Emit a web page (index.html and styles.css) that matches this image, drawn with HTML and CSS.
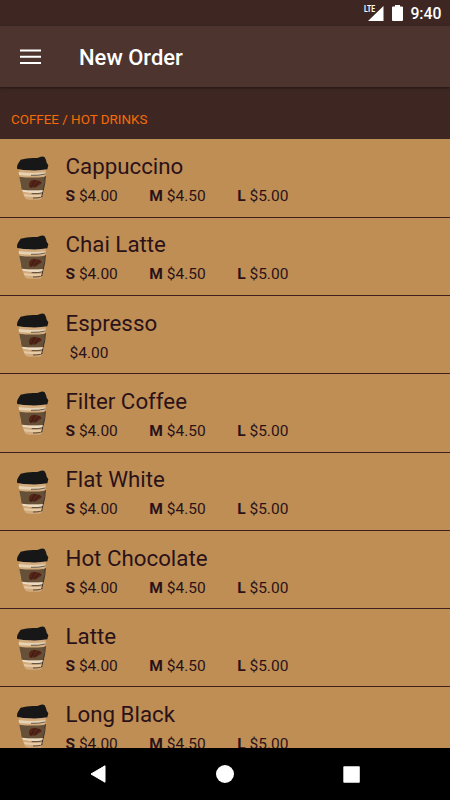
FILE: index.html
```html
<!DOCTYPE html>
<html lang="en">
<head>
    <meta charset="UTF-8">
    <meta name="viewport" content="width=device-width, initial-scale=1.0">
    <title>New Order</title>
    <link rel="stylesheet" href="styles.css">
</head>
<body>
    <div class="status-bar">
        <svg class="signal" width="21" height="18" viewBox="0 0 21 18">
            <path d="M20.500 3v15H5z" fill="#fff"/>
            <text x="1" y="9" class="lte" textLength="11" lengthAdjust="spacingAndGlyphs">LTE</text>
        </svg>
        <svg class="battery" width="11" height="16" viewBox="0 0 11 16">
            <path d="M3 0h5v1.500h2q1 0 1 1V15q0 1-1 1H1q-1 0-1-1V2.500q0-1 1-1h2z" fill="#fff"/>
        </svg>
        <span class="clock">9:40</span>
    </div>

    <div class="header">
        <svg class="menu-icon" width="22" height="16" viewBox="0 0 22 16">
            <path d="M0 .5h21v2H0zM0 6.700h21v2H0zM0 12.900h21v2H0z" fill="#fff"/>
        </svg>
        <h1>New Order</h1>
    </div>

    <h2 class="category">COFFEE / HOT DRINKS</h2>

    <div id="drinkList" class="drink-list"></div>

    <div class="nav-bar">
        <svg width="16" height="18" viewBox="0 0 16 18"><path d="M15 .8v16.400L1 9z" fill="#fff" stroke="#fff" stroke-linejoin="round"/></svg>
        <svg width="18" height="18" viewBox="0 0 18 18"><circle cx="9" cy="9" r="9" fill="#fff"/></svg>
        <svg width="17" height="17" viewBox="0 0 17 17"><rect x=".3" y=".3" width="16.500" height="16.500" rx=".8" fill="#fff"/></svg>
    </div>

    <svg width="0" height="0" class="sprites">
        <symbol id="cup" viewBox="18 21 102 144">
            <path d="M24 60h81l-3 52-8 34q-2 9-12 9H55q-12 0-15-9L28 112z" fill="#d2ab7d"/>
            <path d="M23 72q34 5 80 1l-1 9q-40 3-78-1z" fill="#e6d2b4"/>
            <path d="M60 82q24 1 43-4" stroke="#2a211a" stroke-width="2" fill="none"/>
            <path d="M25 86q38 5 78 0l-5 40q-32 4-66-1z" fill="#665138"/>
            <path d="M33 125q32 5 65 1l-2 8q-31 3-60-3z" fill="#eddcc4"/>
            <path d="M62 137q20 1 34-3M66 150q16 1 28-4" stroke="#1d1815" stroke-width="2" fill="none"/>
            <path d="M38 138q25 5 55 2l-2 6q-28 3-50-1z" fill="#e6cba6"/>
            <path d="M103 84q0 20-5 38l-6 25" stroke="#2b2119" stroke-width="2.500" fill="none"/>
            <path d="M55 117q-4-13 7-20 8-4 14 0 5-1 9 2 9 3 6 8-9 4-13 9-9 5-14 2-4 4-9-1z" fill="#562518"/>
            <path d="M74 97q-8 4-8 10t-7 9M86 101q-5 1-8 6t-7 8" stroke="#251411" stroke-width="2" fill="none"/>
            <path d="M22 46l7-11q20-6 44-5 8 1 14-3 9-3 14 1l4 8 2 8 5 8-3 12q-22 4-50 3-22 0-40-4-3-8 3-17z" fill="#171717"/>
        </symbol>
    </svg>

    <script>
        const drinks = [
            { name: 'Cappuccino', sizes: true },
            { name: 'Chai Latte', sizes: true },
            { name: 'Espresso', sizes: false },
            { name: 'Filter Coffee', sizes: true },
            { name: 'Flat White', sizes: true },
            { name: 'Hot Chocolate', sizes: true },
            { name: 'Latte', sizes: true },
            { name: 'Long Black', sizes: true }
        ];

        const drinkList = document.getElementById('drinkList');
        drinks.forEach(drink => {
            const item = document.createElement('div');
            item.className = 'drink-item';
            const prices = drink.sizes
                ? '<span><b>S</b> $4.00</span><span><b>M</b> $4.50</span><span><b>L</b> $5.00</span>'
                : '<span class="single">$4.00</span>';
            item.innerHTML = `
                <svg class="cup" width="34" height="48"><use href="#cup"/></svg>
                <div class="drink-info">
                    <h3>${drink.name}</h3>
                    <div class="prices">${prices}</div>
                </div>
            `;
            drinkList.appendChild(item);
        });
    </script>
</body>
</html>
```

FILE: styles.css
```css
* {
    box-sizing: border-box;
}
body {
    font-family: Roboto, sans-serif;
    margin: 0;
    height: 800px;
    display: flex;
    flex-direction: column;
    overflow: hidden;
    background-color: #3e2723;
    color: #2b1219;
}
h1, h2, h3 {
    margin: 0;
}
.status-bar {
    height: 26px;
    flex-shrink: 0;
    display: flex;
    justify-content: flex-end;
    align-items: flex-start;
    padding-right: 8.5px;
    background-color: #3e2723;
    color: #fff;
}
.signal {
    margin-top: 3px;
}
.lte {
    font-size: 9px;
    font-weight: 700;
    fill: #fff;
    stroke: #3e2723;
    stroke-width: 1px;
    paint-order: stroke;
}
.battery {
    margin: 5px 7px 0 8px;
}
.clock {
    font-size: 15.8px;
    font-weight: 500;
    line-height: 28px;
}
.header {
    height: 61px;
    flex-shrink: 0;
    display: flex;
    align-items: center;
    padding: 2px 0 0 20px;
    background-color: #4e342e;
    color: #fff;
    box-shadow: 0 1px 3px rgba(0,0,0,0.45);
    z-index: 1;
}
.menu-icon {
    margin-bottom: 2px;
}
.header h1 {
    margin: 0 0 1px 37px;
    font-size: 22px;
    font-weight: 500;
}
.category {
    height: 52px;
    flex-shrink: 0;
    padding: 23px 0 0 11px;
    font-size: 13.4px;
    font-weight: 400;
    line-height: 19px;
    color: #f76b08;
}
.drink-list {
    flex: 1;
    min-height: 0;
    padding-top: 0.4px;
    overflow: hidden;
    background-color: #be8e54;
}
.drink-item {
    height: 78.3px;
    display: flex;
    border-bottom: 1px solid #3e1f1c;
}
.cup {
    flex-shrink: 0;
    margin: 16px 0 0 16.5px;
}
.drink-info {
    padding: 12.8px 0 0 15px;
}
.drink-info h3 {
    font-size: 22.3px;
    font-weight: 400;
    line-height: 28px;
}
.prices {
    display: flex;
    gap: 31.5px;
    margin-top: 6px;
    font-size: 15.5px;
    line-height: 20px;
}
.single {
    margin-left: 4px;
}
.nav-bar {
    height: 52px;
    flex-shrink: 0;
    display: flex;
    justify-content: space-between;
    align-items: center;
    padding: 0 90px;
    background-color: #000;
}
.sprites {
    position: absolute;
}
```
